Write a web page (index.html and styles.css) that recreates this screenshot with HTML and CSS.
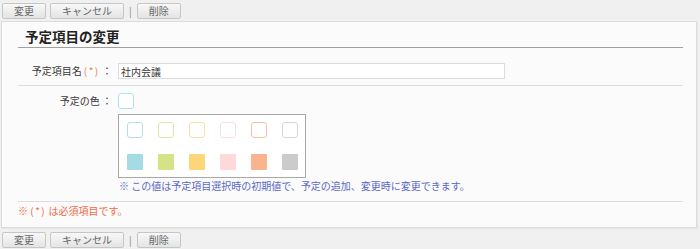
FILE: index.html
```html
<!doctype html>
<html lang="ja">
<head>
<meta charset="utf-8">
<title>予定項目の変更</title>
<link rel="stylesheet" href="styles.css">
</head>
<body>

	<div class="toolbar">
		<button class="btn">変更</button>
		<button class="btn">キャンセル</button>
		<span class="sep">|</span>
		<button class="btn">削除</button>
	</div>

	<div class="panel">

		<h2 class="title">予定項目の変更</h2>

		<div class="row row-name">
			<div class="label">予定項目名<span class="req">(*)</span> ：</div>
			<div class="value"><input class="text" value="社内会議"></div>
		</div>

		<div class="row row-color">
			<div class="label">予定の色 ：</div>
			<div class="value">
				<div class="swatch outline c1"></div>
				<div class="palette">
					<div class="swatch outline c1"></div>
					<div class="swatch outline c2"></div>
					<div class="swatch outline c3"></div>
					<div class="swatch outline c4"></div>
					<div class="swatch outline c5"></div>
					<div class="swatch outline c6"></div>
					<div class="swatch fill c1"></div>
					<div class="swatch fill c2"></div>
					<div class="swatch fill c3"></div>
					<div class="swatch fill c4"></div>
					<div class="swatch fill c5"></div>
					<div class="swatch fill c6"></div>
				</div>
				<div class="note">※ この値は予定項目選択時の初期値で、予定の追加、変更時に変更できます。</div>
			</div>
		</div>

		<div class="required">※ <span class="star">(*)</span> は必須項目です。</div>

	</div>

	<div class="toolbar bottom">
		<button class="btn">変更</button>
		<button class="btn">キャンセル</button>
		<span class="sep">|</span>
		<button class="btn">削除</button>
	</div>

</body>
</html>
```

FILE: styles.css
```css
body { background: #f0f0f0; color: #3a3a3a; font: 10px "Noto Sans CJK JP", "Liberation Sans", sans-serif; margin: 0; }

.toolbar { align-items: center; display: flex; height: 21px; padding: 0 2px; box-sizing: border-box; }
.toolbar.bottom { height: 22px; padding-top: 4px; align-items: flex-start; }
.toolbar .btn + .btn { margin-left: 4px; }
.btn { background: linear-gradient( #f8f8f8, #e4e4e4 ); border: 1px solid #c6c6c6; border-radius: 2px; color: #666; font: inherit; height: 16px; line-height: 14px; padding: 0 11px; }
.sep { color: #888; margin: 0 5px 0 5px; }

.panel { background: #fbfbfb; border: 1px solid #dcdcdc; box-shadow: 1px 1px 0 #e6e6e6; margin: 0 3px 0 1px; padding: 0 13px 0 16px; }

.title { border-bottom: 1px solid #a0a0a0; font-size: 13.5px; font-weight: bold; height: 18px; line-height: 18px; margin: 0; padding: 5px 0 2px 7px; color: #222; }

.row { border-bottom: 1px solid #dedede; display: grid; grid-template-columns: 100px 1fr; }
.row-name { padding: 15px 0 6px; }
.row-color { padding: 7px 0 8px; }
.label { line-height: 16px; padding-right: 6px; text-align: right; }
.req { color: #f07a5a; letter-spacing: 1.5px; padding-left: 2px; }

.text { background: #fff; border: 1px solid #dcdcdc; box-sizing: border-box; display: block; font: inherit; color: #333; height: 16px; padding: 0 2px; width: 387px; }

.swatch { border-radius: 3px; box-sizing: border-box; height: 16px; width: 16px; }
.outline { background: #fff; border: 1.5px solid; }
.fill { border-radius: 1px; }
.outline.c1 { border-color: #b4e0e8; }
.outline.c2 { border-color: #dbe6a6; }
.outline.c3 { border-color: #fde0a0; }
.outline.c4 { border-color: #fcdede; }
.outline.c5 { border-color: #f8bea0; }
.outline.c6 { border-color: #d6d6d6; }
.fill.c1 { background: #a5dbe4; }
.fill.c2 { background: #d5e286; }
.fill.c3 { background: #fdd679; }
.fill.c4 { background: #ffd9d9; }
.fill.c5 { background: #f8b48a; }
.fill.c6 { background: #cbcbcb; }

.palette { background: #fff; border: 1px solid #a8a8a8; display: grid; gap: 16px 15px; grid-template-columns: repeat( 6, 16px ); margin-top: 5px; padding: 7px 7px 7px 8px; width: max-content; }

.note { color: #5a68c8; line-height: 14px; margin-top: 1px; padding-left: 1px; }

.required { color: #f06a48; line-height: 14px; padding: 2px 0 9px; }
.star { letter-spacing: 1.5px; }
```
